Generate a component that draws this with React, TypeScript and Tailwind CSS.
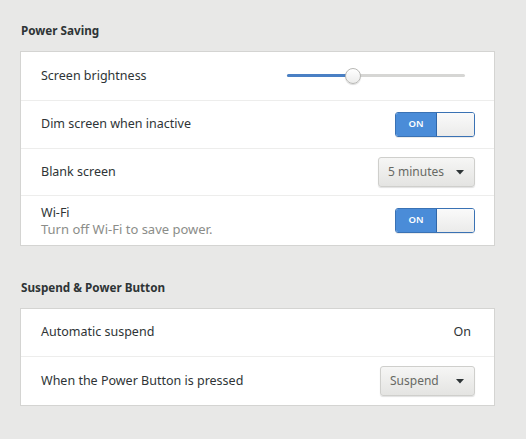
import React from "react";

function Toggle() {
  return (
    <div className="flex h-[25px] w-[80px] overflow-hidden rounded-[3px] border border-[#3a72b4] shadow-[0_1px_0_rgba(0,0,0,0.08)]">
      <div className="flex w-[40px] items-center justify-center bg-[#4a8cd8] text-[9.5px] font-semibold text-white">
        ON
      </div>
      <div className="flex-1 border-l border-[#2f66a8] bg-gradient-to-b from-[#fafafa] to-[#ebebea]" />
    </div>
  );
}

function Dropdown({ label, w }: { label: string; w: string }) {
  return (
    <div
      className={`flex h-[30px] ${w} items-center justify-between rounded-[3px] border border-[#cfcfcc] bg-gradient-to-b from-[#f6f6f5] to-[#e4e4e2] pl-[9px] pr-[10px] text-[12px] text-[#676964] shadow-[0_1px_1px_rgba(0,0,0,0.12)]`}
    >
      <span>{label}</span>
      <svg width="8" height="5" viewBox="0 0 8 5">
        <path d="M0 0 L8 0 L4 4.5 Z" fill="#2e3436" />
      </svg>
    </div>
  );
}

export default function App() {
  return (
    <div
      className="min-h-[439px] w-[526px] bg-[#e8e8e7] pl-[20px] pr-[31px] pt-[22px] text-[#2e3436]"
      style={{ fontFamily: '"Noto Sans", "Open Sans", sans-serif' }}
    >
      <div className="h-[16px] pl-px text-[11.7px] font-bold leading-[16px]">Power Saving</div>
      <div className="mt-[13px] border border-[#d4d4d2] bg-white">
        <div className="flex h-[48px] items-center justify-between pl-[20px] pr-[29px] text-[12.5px]">
          <span>Screen brightness</span>
          <div className="relative h-[16px] w-[178px]">
            <div className="absolute left-0 right-0 top-[6px] h-[3px] rounded-full bg-[#d6d6d4]" />
            <div className="absolute left-0 top-[6px] h-[3px] w-[60px] rounded-full bg-[#4a80c4]" />
            <div className="absolute left-[58px] top-0 h-[16px] w-[16px] rounded-full border border-[#b8b8b5] bg-gradient-to-b from-white to-[#ececeb] shadow-[0_1px_1px_rgba(0,0,0,0.15)]" />
          </div>
        </div>
        <div className="h-px bg-[#ededec]" />
        <div className="flex h-[47px] items-center justify-between pl-[20px] pr-[19px] text-[12.5px]">
          <span>Dim screen when inactive</span>
          <Toggle />
        </div>
        <div className="h-px bg-[#ededec]" />
        <div className="flex h-[46px] items-center justify-between pl-[20px] pr-[19px] text-[12.5px]">
          <span>Blank screen</span>
          <Dropdown label="5 minutes" w="w-[97px]" />
        </div>
        <div className="h-px bg-[#ededec]" />
        <div className="flex h-[49px] items-center justify-between pl-[20px] pr-[19px] text-[12.5px]">
          <div className="flex flex-col leading-[17px]">
            <span>Wi-Fi</span>
            <span className="text-[13px] text-[#8b8d89]">Turn off Wi-Fi to save power.</span>
          </div>
          <Toggle />
        </div>
      </div>

      <div className="mt-[33px] h-[16px] pl-px text-[11.7px] font-bold leading-[16px]">Suspend &amp; Power Button</div>
      <div className="mt-[13px] border border-[#d4d4d2] bg-white">
        <div className="flex h-[47px] items-center justify-between pl-[20px] pr-[23px] text-[12.5px]">
          <span>Automatic suspend</span>
          <span>On</span>
        </div>
        <div className="h-px bg-[#ededec]" />
        <div className="flex h-[48px] items-center justify-between pl-[20px] pr-[19px] text-[12.5px]">
          <span>When the Power Button is pressed</span>
          <Dropdown label="Suspend" w="w-[95px]" />
        </div>
      </div>
    </div>
  );
}
